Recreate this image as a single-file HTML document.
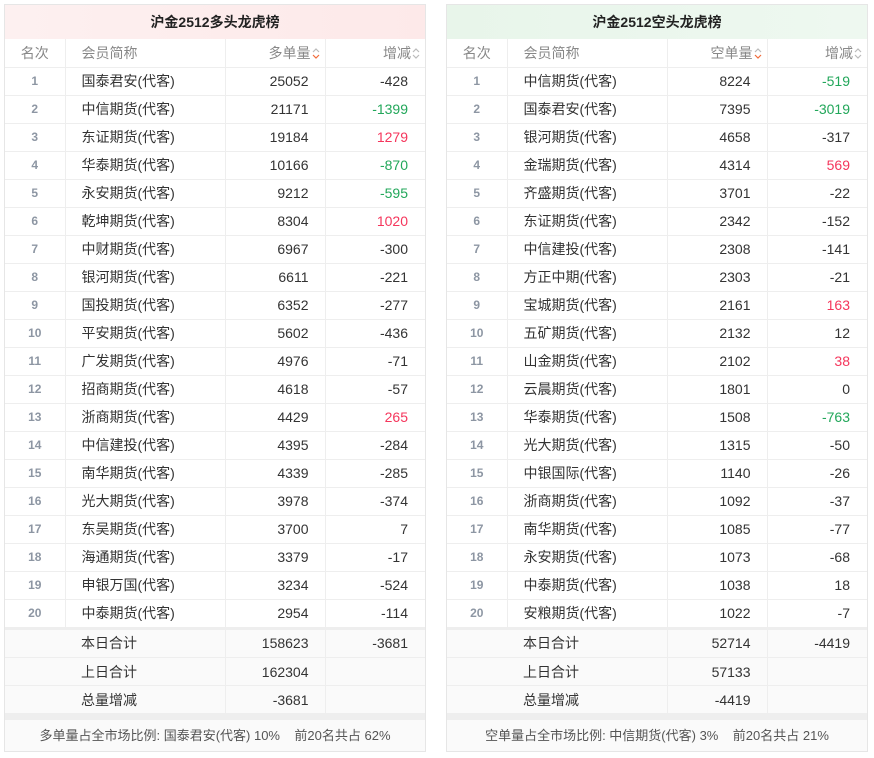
<!DOCTYPE html>
<html><head><meta charset="utf-8"><style>
*{box-sizing:border-box;margin:0;padding:0}
body{width:874px;height:758px;background:#fff;font-family:"Liberation Sans","Noto Sans CJK SC",sans-serif;font-size:14px;color:#333;position:relative}
.p{position:absolute;top:4px;width:422px;border:1px solid #e6e6e6;background:#fff}
.t{height:34px;line-height:34px;text-align:center;font-weight:bold;font-size:14px;color:#222}
.l .t{background:linear-gradient(90deg,#fdf0f0,#fde9e9)}
.r .t{background:linear-gradient(90deg,#e8f5ea,#eef8f0)}
table{border-collapse:collapse;width:420px;table-layout:fixed}
td{height:28px;border-bottom:1px solid #eee;border-right:1px solid #eee;padding:0}
td:last-child{border-right:none}
td.k{text-align:center;font-weight:bold;color:#8d96a3;font-size:12px}
td.n{padding-left:16px}
td.q{text-align:right;padding-right:16px}
td.c{text-align:right;padding-right:17px}
tr.h td{color:#888}
tr.h td.k{font-weight:normal;font-size:14px;color:#888}
tr.h td.q{padding-right:5px}
tr.h td.c{padding-right:5px}
svg.s{vertical-align:-2px;margin-left:1px}
.red{color:#f5365c}.grn{color:#22a75a}
.gap{height:2px;background:#eee}
.gap2{height:6px;background:#eee}
tr.tot td{background:#fafafa}
.f{height:31px;line-height:31px;text-align:center;background:#fafafa;color:#555;font-size:13px}
</style></head><body>
<div class="p l" style="left:4px">
<div class="t">沪金2512多头龙虎榜</div>
<table><colgroup><col style="width:60px"><col style="width:160px"><col style="width:100px"><col style="width:100px"></colgroup>
<tr class="h"><td class="k">名次</td><td class="n">会员简称</td><td class="q">多单量<svg class="s" width="8" height="13" viewBox="0 0 8 13"><path d="M1 5L4 2L7 5" fill="none" stroke="#bbb" stroke-width="1.2"/><path d="M1 8L4 11L7 8" fill="none" stroke="#f26b3a" stroke-width="1.2"/></svg></td><td class="c">增减<svg class="s" width="8" height="13" viewBox="0 0 8 13"><path d="M1 5L4 2L7 5M1 8L4 11L7 8" fill="none" stroke="#bbb" stroke-width="1.2"/></svg></td></tr>
<tr><td class="k">1</td><td class="n">国泰君安(代客)</td><td class="q">25052</td><td class="c">-428</td></tr>
<tr><td class="k">2</td><td class="n">中信期货(代客)</td><td class="q">21171</td><td class="c grn">-1399</td></tr>
<tr><td class="k">3</td><td class="n">东证期货(代客)</td><td class="q">19184</td><td class="c red">1279</td></tr>
<tr><td class="k">4</td><td class="n">华泰期货(代客)</td><td class="q">10166</td><td class="c grn">-870</td></tr>
<tr><td class="k">5</td><td class="n">永安期货(代客)</td><td class="q">9212</td><td class="c grn">-595</td></tr>
<tr><td class="k">6</td><td class="n">乾坤期货(代客)</td><td class="q">8304</td><td class="c red">1020</td></tr>
<tr><td class="k">7</td><td class="n">中财期货(代客)</td><td class="q">6967</td><td class="c">-300</td></tr>
<tr><td class="k">8</td><td class="n">银河期货(代客)</td><td class="q">6611</td><td class="c">-221</td></tr>
<tr><td class="k">9</td><td class="n">国投期货(代客)</td><td class="q">6352</td><td class="c">-277</td></tr>
<tr><td class="k">10</td><td class="n">平安期货(代客)</td><td class="q">5602</td><td class="c">-436</td></tr>
<tr><td class="k">11</td><td class="n">广发期货(代客)</td><td class="q">4976</td><td class="c">-71</td></tr>
<tr><td class="k">12</td><td class="n">招商期货(代客)</td><td class="q">4618</td><td class="c">-57</td></tr>
<tr><td class="k">13</td><td class="n">浙商期货(代客)</td><td class="q">4429</td><td class="c red">265</td></tr>
<tr><td class="k">14</td><td class="n">中信建投(代客)</td><td class="q">4395</td><td class="c">-284</td></tr>
<tr><td class="k">15</td><td class="n">南华期货(代客)</td><td class="q">4339</td><td class="c">-285</td></tr>
<tr><td class="k">16</td><td class="n">光大期货(代客)</td><td class="q">3978</td><td class="c">-374</td></tr>
<tr><td class="k">17</td><td class="n">东吴期货(代客)</td><td class="q">3700</td><td class="c">7</td></tr>
<tr><td class="k">18</td><td class="n">海通期货(代客)</td><td class="q">3379</td><td class="c">-17</td></tr>
<tr><td class="k">19</td><td class="n">申银万国(代客)</td><td class="q">3234</td><td class="c">-524</td></tr>
<tr><td class="k">20</td><td class="n">中泰期货(代客)</td><td class="q">2954</td><td class="c">-114</td></tr>
</table>
<div class="gap"></div>
<table><colgroup><col style="width:60px"><col style="width:160px"><col style="width:100px"><col style="width:100px"></colgroup>
<tr class="tot"><td style="border-right:none"></td><td class="n">本日合计</td><td class="q">158623</td><td class="c">-3681</td></tr>
<tr class="tot"><td style="border-right:none"></td><td class="n">上日合计</td><td class="q">162304</td><td class="c"></td></tr>
<tr class="tot"><td style="border-right:none"></td><td class="n">总量增减</td><td class="q">-3681</td><td class="c"></td></tr>
</table>
<div class="gap2"></div>
<div class="f">多单量占全市场比例: 国泰君安(代客) 10% &nbsp;&nbsp; 前20名共占 62%</div>
</div>

<div class="p r" style="left:446px">
<div class="t">沪金2512空头龙虎榜</div>
<table><colgroup><col style="width:60px"><col style="width:160px"><col style="width:100px"><col style="width:100px"></colgroup>
<tr class="h"><td class="k">名次</td><td class="n">会员简称</td><td class="q">空单量<svg class="s" width="8" height="13" viewBox="0 0 8 13"><path d="M1 5L4 2L7 5" fill="none" stroke="#bbb" stroke-width="1.2"/><path d="M1 8L4 11L7 8" fill="none" stroke="#f26b3a" stroke-width="1.2"/></svg></td><td class="c">增减<svg class="s" width="8" height="13" viewBox="0 0 8 13"><path d="M1 5L4 2L7 5M1 8L4 11L7 8" fill="none" stroke="#bbb" stroke-width="1.2"/></svg></td></tr>
<tr><td class="k">1</td><td class="n">中信期货(代客)</td><td class="q">8224</td><td class="c grn">-519</td></tr>
<tr><td class="k">2</td><td class="n">国泰君安(代客)</td><td class="q">7395</td><td class="c grn">-3019</td></tr>
<tr><td class="k">3</td><td class="n">银河期货(代客)</td><td class="q">4658</td><td class="c">-317</td></tr>
<tr><td class="k">4</td><td class="n">金瑞期货(代客)</td><td class="q">4314</td><td class="c red">569</td></tr>
<tr><td class="k">5</td><td class="n">齐盛期货(代客)</td><td class="q">3701</td><td class="c">-22</td></tr>
<tr><td class="k">6</td><td class="n">东证期货(代客)</td><td class="q">2342</td><td class="c">-152</td></tr>
<tr><td class="k">7</td><td class="n">中信建投(代客)</td><td class="q">2308</td><td class="c">-141</td></tr>
<tr><td class="k">8</td><td class="n">方正中期(代客)</td><td class="q">2303</td><td class="c">-21</td></tr>
<tr><td class="k">9</td><td class="n">宝城期货(代客)</td><td class="q">2161</td><td class="c red">163</td></tr>
<tr><td class="k">10</td><td class="n">五矿期货(代客)</td><td class="q">2132</td><td class="c">12</td></tr>
<tr><td class="k">11</td><td class="n">山金期货(代客)</td><td class="q">2102</td><td class="c red">38</td></tr>
<tr><td class="k">12</td><td class="n">云晨期货(代客)</td><td class="q">1801</td><td class="c">0</td></tr>
<tr><td class="k">13</td><td class="n">华泰期货(代客)</td><td class="q">1508</td><td class="c grn">-763</td></tr>
<tr><td class="k">14</td><td class="n">光大期货(代客)</td><td class="q">1315</td><td class="c">-50</td></tr>
<tr><td class="k">15</td><td class="n">中银国际(代客)</td><td class="q">1140</td><td class="c">-26</td></tr>
<tr><td class="k">16</td><td class="n">浙商期货(代客)</td><td class="q">1092</td><td class="c">-37</td></tr>
<tr><td class="k">17</td><td class="n">南华期货(代客)</td><td class="q">1085</td><td class="c">-77</td></tr>
<tr><td class="k">18</td><td class="n">永安期货(代客)</td><td class="q">1073</td><td class="c">-68</td></tr>
<tr><td class="k">19</td><td class="n">中泰期货(代客)</td><td class="q">1038</td><td class="c">18</td></tr>
<tr><td class="k">20</td><td class="n">安粮期货(代客)</td><td class="q">1022</td><td class="c">-7</td></tr>
</table>
<div class="gap"></div>
<table><colgroup><col style="width:60px"><col style="width:160px"><col style="width:100px"><col style="width:100px"></colgroup>
<tr class="tot"><td style="border-right:none"></td><td class="n">本日合计</td><td class="q">52714</td><td class="c">-4419</td></tr>
<tr class="tot"><td style="border-right:none"></td><td class="n">上日合计</td><td class="q">57133</td><td class="c"></td></tr>
<tr class="tot"><td style="border-right:none"></td><td class="n">总量增减</td><td class="q">-4419</td><td class="c"></td></tr>
</table>
<div class="gap2"></div>
<div class="f">空单量占全市场比例: 中信期货(代客) 3% &nbsp;&nbsp; 前20名共占 21%</div>
</div>
</body></html>
